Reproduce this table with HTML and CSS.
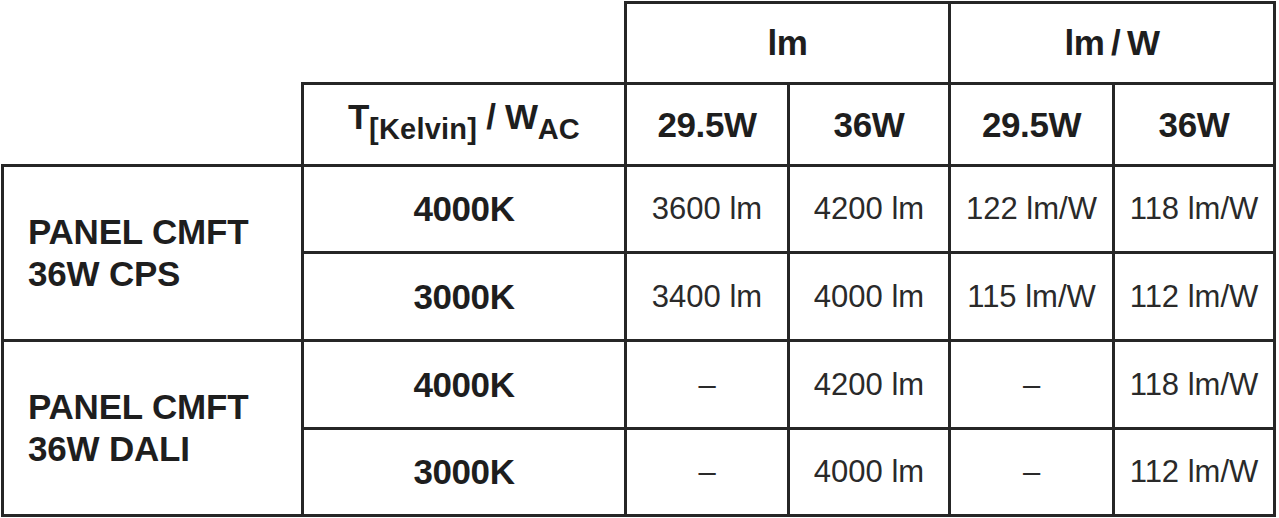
FILE: index.html
```html
<!DOCTYPE html>
<html lang="en">
<head>
<meta charset="utf-8">
<title>Panel CMFT data</title>
<link rel="stylesheet" href="styles.css">
</head>
<body>
<table class="spec">
  <colgroup>
    <col class="c-prod">
    <col class="c-temp">
    <col class="c-a">
    <col class="c-b">
    <col class="c-c">
    <col class="c-d">
  </colgroup>
  <tr class="r-h1">
    <td class="blank" colspan="2"></td>
    <th class="hd" colspan="2">lm</th>
    <th class="hd" colspan="2">lm&#8201;/&#8201;W</th>
  </tr>
  <tr class="r-h2">
    <td class="blank"></td>
    <th class="hd unit">T<span class="sub">[Kelvin]</span> / W<span class="sub">AC</span></th>
    <th class="hd">29.5W</th>
    <th class="hd">36W</th>
    <th class="hd">29.5W</th>
    <th class="hd">36W</th>
  </tr>
  <tr class="r-a">
    <th class="prod" rowspan="2">PANEL CMFT<br>36W CPS</th>
    <th class="hd">4000K</th>
    <td>3600 lm</td>
    <td>4200 lm</td>
    <td>122 lm/W</td>
    <td>118 lm/W</td>
  </tr>
  <tr class="r-b">
    <th class="hd">3000K</th>
    <td>3400 lm</td>
    <td>4000 lm</td>
    <td>115 lm/W</td>
    <td>112 lm/W</td>
  </tr>
  <tr class="r-b">
    <th class="prod" rowspan="2">PANEL CMFT<br>36W DALI</th>
    <th class="hd">4000K</th>
    <td>–</td>
    <td>4200 lm</td>
    <td>–</td>
    <td>118 lm/W</td>
  </tr>
  <tr class="r-a">
    <th class="hd">3000K</th>
    <td>–</td>
    <td>4000 lm</td>
    <td>–</td>
    <td>112 lm/W</td>
  </tr>
</table>
</body>
</html>
```

FILE: styles.css
```css
html, body {
  margin: 0;
  padding: 0;
  background: #ffffff;
}

body {
  font-family: "Liberation Sans", Arial, sans-serif;
  color: #1e1e1e;
}

.spec {
  border-collapse: collapse;
  table-layout: fixed;
  margin: 1px 0 0 1px;
}

.c-prod { width: 300px; }
.c-temp { width: 323px; }
.c-a { width: 163px; }
.c-b { width: 161px; }
.c-c { width: 164px; }
.c-d { width: 161px; }

.spec td,
.spec th {
  border: 3px solid #262626;
  padding: 0;
  text-align: center;
  vertical-align: middle;
  font-size: 31px;
  font-weight: 400;
  color: #2a2a2a;
  white-space: nowrap;
}

.spec .blank {
  border: none;
}

.r-h1 { height: 81px; }
.r-h2 { height: 82px; }
.r-a { height: 87px; }
.r-b { height: 88px; }

.spec .hd {
  font-size: 35px;
  font-weight: 700;
  letter-spacing: -0.4px;
  color: #1e1e1e;
}

.spec .unit {
  padding-bottom: 6px;
}

.spec .prod {
  text-align: left;
  padding-left: 24px;
  font-size: 35px;
  font-weight: 700;
  line-height: 42px;
  letter-spacing: -0.2px;
  color: #1e1e1e;
}

.sub {
  font-size: 29px;
  vertical-align: -10px;
  letter-spacing: 0.2px;
}
```
